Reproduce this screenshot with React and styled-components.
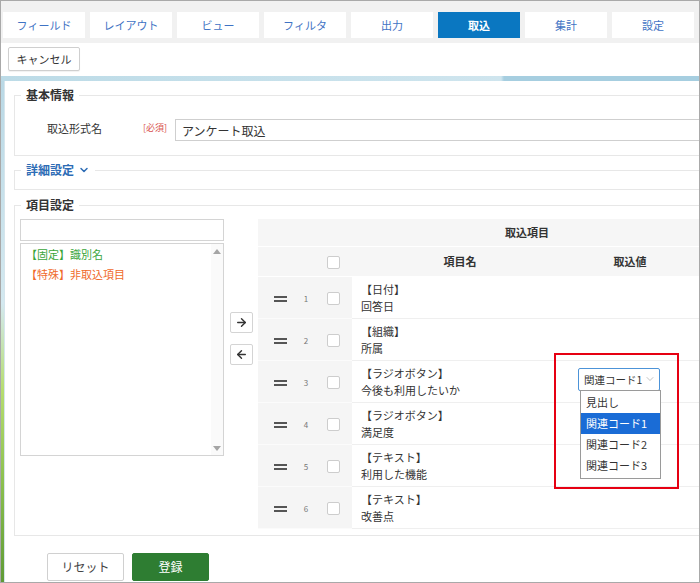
import React from 'react'
import styled, { createGlobalStyle } from 'styled-components'
import { ArrowRight, ArrowLeft, ChevronDown } from 'lucide-react'

const GlobalStyle = createGlobalStyle`
  html, body { margin: 0; padding: 0; background: #fff; }
  body { font-family: "Noto Sans CJK JP", "Noto Sans", sans-serif; color: #333; }
  * { box-sizing: border-box; }
`

const Frame = styled.div`
  position: relative;
  width: 700px;
  height: 583px;
  border: 1px solid #a9a9a9;
  overflow: hidden;
  display: flex;
  flex-direction: column;
  font-size: 11px;
`

const TabBar = styled.nav`
  display: flex;
  gap: 5px;
  padding: 11px 0 5px 2px;
  background: #f1f1f1;
`

const Tab = styled.div`
  flex: 0 0 82px;
  height: 26px;
  display: flex;
  align-items: center;
  justify-content: center;
  background: ${(p) => (p.$active ? '#0a77c1' : '#fff')};
  color: ${(p) => (p.$active ? '#fff' : '#3f73c4')};
  font-weight: ${(p) => (p.$active ? 'bold' : 'normal')};
  font-size: 11px;
`

const Toolbar = styled.div`
  padding: 4px 0 5px 7px;
  background: #fff;
`

const CancelButton = styled.button`
  width: 72px;
  height: 24px;
  border: 1px solid #cfcfcf;
  border-radius: 2px;
  background: #fff;
  color: #333;
  font: inherit;
  font-size: 11px;
  padding: 0;
  box-shadow: 0 1px 1px rgba(0, 0, 0, 0.06);
`

const Stage = styled.div`
  flex: 1;
  padding: 5px 0 0 3px;
  background:
    linear-gradient(to right, #bcdbe7 0, #cfe5ee 500px, #a6cee0 503px) top / 100% 5px no-repeat,
    linear-gradient(to bottom, #b9d8e5 0, #d4e9f0 45%, #b6dd70 62%, #8cc04f 80%, #5f9a36 100%);
`

const Panel = styled.div`
  width: 830px;
  height: 100%;
  background: #fff;
  padding-top: 6px;
  border-left: 1px solid #d5e5ec;
`

const Group = styled.fieldset`
  margin: ${(p) => p.$top || 0}px 0 0 9px;
  padding: 0 0 ${(p) => p.$pb || 0}px 0;
  border: 1px solid #e7e7e7;
  min-width: 0;
`

const Legend = styled.legend`
  margin-left: 6px;
  padding: 0 5px;
  font-size: 12px;
  line-height: 16px;
  font-weight: bold;
  color: ${(p) => (p.$link ? '#2d6cb5' : '#333')};
  display: flex;
  align-items: center;
  gap: 4px;
`

const FieldRow = styled.div`
  display: flex;
  align-items: center;
  margin-top: 16px;
`

const FieldLabel = styled.span`
  width: 96px;
  margin-left: 32px;
  margin-top: -5px;
  font-size: 11px;
`

const RequiredTag = styled.span`
  width: 32px;
  margin-top: -5px;
  font-size: 9px;
  color: #d9534f;
`

const TextInput = styled.div`
  flex: 1;
  height: 22px;
  border: 1px solid #cfcfcf;
  padding-left: 6px;
  display: flex;
  align-items: center;
  font-size: 12px;
  color: #333;
`

const ItemsBody = styled.div`
  display: flex;
  align-items: flex-start;
  margin-top: 6px;
  padding-left: 5px;
`

const SourceColumn = styled.div`
  width: 204px;
  display: flex;
  flex-direction: column;
  gap: 2px;
`

const SearchBox = styled.div`
  height: 22px;
  border: 1px solid #d4d4d4;
  background: #fff;
`

const ListBox = styled.div`
  height: 213px;
  border: 1px solid #d4d4d4;
  display: flex;
`

const ListItems = styled.ul`
  flex: 1;
  list-style: none;
  margin: 0;
  padding: 0 0 0 5px;
`

const ListItem = styled.li`
  line-height: 20px;
  font-size: 11px;
  color: ${(p) => p.$color};
`

const ScrollTrack = styled.div`
  width: 12px;
  background: #fafafa;
  display: flex;
  flex-direction: column;
  justify-content: space-between;
  align-items: center;
  padding: 5px 0 4px;
`

const ScrollArrow = styled.span`
  width: 0;
  height: 0;
  border-left: 4px solid transparent;
  border-right: 4px solid transparent;
  ${(p) => (p.$down ? 'border-top: 5px solid #a5a5a5;' : 'border-bottom: 5px solid #a5a5a5;')}
`

const MoveColumn = styled.div`
  display: flex;
  flex-direction: column;
  gap: 11px;
  margin: 93px 5px 0 6px;
`

const MoveButton = styled.button`
  width: 23px;
  height: 21px;
  padding: 0;
  border: 1px solid #d4d4d4;
  border-radius: 2px;
  background: #fff;
  display: flex;
  align-items: center;
  justify-content: center;
  color: #333;
`

const ItemTable = styled.table`
  width: 538px;
  border-collapse: collapse;
  table-layout: fixed;
  font-size: 11px;
`

const Col = styled.col`
  width: ${(p) => p.$w}px;
`

const HeadCell = styled.th`
  height: ${(p) => p.$h || 30}px;
  background: #f6f6f6;
  border-bottom: 1px solid #fff;
  font-weight: bold;
  font-size: 11px;
  color: #333;
  text-align: center;
  padding: 0;
`

const Cell = styled.td`
  height: 42px;
  padding: 0;
  background: ${(p) => (p.$shade ? '#f5f5f5' : '#fff')};
  border-bottom: 1px solid ${(p) => (p.$shade ? '#fbfbfb' : '#efefef')};
  text-align: ${(p) => (p.$shade ? 'center' : 'left')};
  vertical-align: middle;
  position: relative;
`

const DragHandle = styled.span`
  display: inline-block;
  width: 13px;
  height: 6px;
  border-top: 2px solid #555;
  border-bottom: 2px solid #555;
  margin-left: 4px;
`

const RowNumber = styled.span`
  font-size: 8px;
  color: #777;
`

const CheckBox = styled.span`
  display: inline-block;
  width: 13px;
  height: 13px;
  border: 1px solid #cdcdcd;
  border-radius: 2px;
  background: #fff;
  vertical-align: middle;
`

const ItemName = styled.div`
  padding-left: 9px;
  padding-top: 2px;
  line-height: 17px;
  color: #333;
`

const Select = styled.div`
  position: absolute;
  left: 10px;
  top: 7px;
  width: 82px;
  height: 23px;
  border: 1px solid #4c93d8;
  border-radius: 2px;
  background: #fff;
  display: flex;
  align-items: center;
  justify-content: space-between;
  padding: 0 3px 0 5px;
  color: #333;
  font-size: 10.5px;
  white-space: nowrap;
  z-index: 2;
`

const Menu = styled.ul`
  position: absolute;
  left: 1px;
  top: 100%;
  width: 81px;
  margin: 0;
  padding: 1px 0 2px;
  list-style: none;
  background: #fff;
  border: 1px solid #9a9a9a;
  font-size: 11px;
`

const MenuItem = styled.li`
  height: 21px;
  line-height: 21px;
  padding-left: 5px;
  background: ${(p) => (p.$selected ? '#1a6cd6' : '#fff')};
  color: ${(p) => (p.$selected ? '#fff' : '#333')};
`

const Actions = styled.div`
  display: flex;
  gap: 8px;
  margin-top: 17px;
  padding-left: 42px;
`

const ActionButton = styled.button`
  width: 77px;
  height: 28px;
  padding: 0;
  font: inherit;
  font-size: 12px;
  border-radius: 2px;
  border: 1px solid ${(p) => (p.$primary ? '#2e7d32' : '#d0d0d0')};
  background: ${(p) => (p.$primary ? '#2e7d32' : '#fff')};
  color: ${(p) => (p.$primary ? '#fff' : '#444')};
`

const Annotation = styled.div`
  position: absolute;
  left: 553px;
  top: 352px;
  width: 125px;
  height: 136px;
  border: 2px solid #e60012;
  pointer-events: none;
  z-index: 3;
`

const tabs = ['フィールド', 'レイアウト', 'ビュー', 'フィルタ', '出力', '取込', '集計', '設定']

const columns = [40, 16, 38, 216, 124, 104]

const rows = [
  { type: '【日付】', name: '回答日' },
  { type: '【組織】', name: '所属' },
  { type: '【ラジオボタン】', name: '今後も利用したいか', select: true },
  { type: '【ラジオボタン】', name: '満足度' },
  { type: '【テキスト】', name: '利用した機能' },
  { type: '【テキスト】', name: '改善点' },
]

const options = ['見出し', '関連コード1', '関連コード2', '関連コード3']

const App = () => {
  return (
    <>
      <GlobalStyle />
      <Frame>
        <TabBar>
          {tabs.map((t) => (
            <Tab key={t} $active={t === '取込'}>
              {t}
            </Tab>
          ))}
        </TabBar>

        <Toolbar>
          <CancelButton>キャンセル</CancelButton>
        </Toolbar>

        <Stage>
          <Panel>
            <Group $pb={14}>
              <Legend>基本情報</Legend>
              <FieldRow>
                <FieldLabel>取込形式名</FieldLabel>
                <RequiredTag>[必須]</RequiredTag>
                <TextInput>アンケート取込</TextInput>
              </FieldRow>
            </Group>

            <Group $top={6} $pb={11}>
              <Legend $link>
                詳細設定
                <ChevronDown size={12} strokeWidth={3} />
              </Legend>
            </Group>

            <Group $top={7} $pb={6}>
              <Legend>項目設定</Legend>
              <ItemsBody>
                <SourceColumn>
                  <SearchBox />
                  <ListBox>
                    <ListItems>
                      <ListItem $color="#3aa53a">【固定】識別名</ListItem>
                      <ListItem $color="#f06a2a">【特殊】非取込項目</ListItem>
                    </ListItems>
                    <ScrollTrack>
                      <ScrollArrow />
                      <ScrollArrow $down />
                    </ScrollTrack>
                  </ListBox>
                </SourceColumn>

                <MoveColumn>
                  <MoveButton>
                    <ArrowRight size={13} strokeWidth={2.6} />
                  </MoveButton>
                  <MoveButton>
                    <ArrowLeft size={13} strokeWidth={2.6} />
                  </MoveButton>
                </MoveColumn>

                <ItemTable>
                  <colgroup>
                    {columns.map((w, i) => (
                      <Col key={i} $w={w} />
                    ))}
                  </colgroup>
                  <thead>
                    <tr>
                      <HeadCell colSpan={6} $h={27}>
                        取込項目
                      </HeadCell>
                    </tr>
                    <tr>
                      <HeadCell />
                      <HeadCell />
                      <HeadCell>
                        <CheckBox />
                      </HeadCell>
                      <HeadCell>項目名</HeadCell>
                      <HeadCell>取込値</HeadCell>
                      <HeadCell />
                    </tr>
                  </thead>
                  <tbody>
                    {rows.map((r, i) => (
                      <tr key={i}>
                        <Cell $shade>
                          <DragHandle />
                        </Cell>
                        <Cell $shade>
                          <RowNumber>{i + 1}</RowNumber>
                        </Cell>
                        <Cell $shade>
                          <CheckBox />
                        </Cell>
                        <Cell>
                          <ItemName>
                            {r.type}
                            <br />
                            {r.name}
                          </ItemName>
                        </Cell>
                        <Cell>
                          {r.select && (
                            <Select>
                              <span>関連コード1</span>
                              <ChevronDown size={12} strokeWidth={1.2} color="#9a9a9a" />
                              <Menu>
                                {options.map((o) => (
                                  <MenuItem key={o} $selected={o === '関連コード1'}>
                                    {o}
                                  </MenuItem>
                                ))}
                              </Menu>
                            </Select>
                          )}
                        </Cell>
                        <Cell />
                      </tr>
                    ))}
                  </tbody>
                </ItemTable>
              </ItemsBody>
            </Group>

            <Actions>
              <ActionButton>リセット</ActionButton>
              <ActionButton $primary>登録</ActionButton>
            </Actions>
          </Panel>
        </Stage>

        <Annotation />
      </Frame>
    </>
  )
}

export default App
